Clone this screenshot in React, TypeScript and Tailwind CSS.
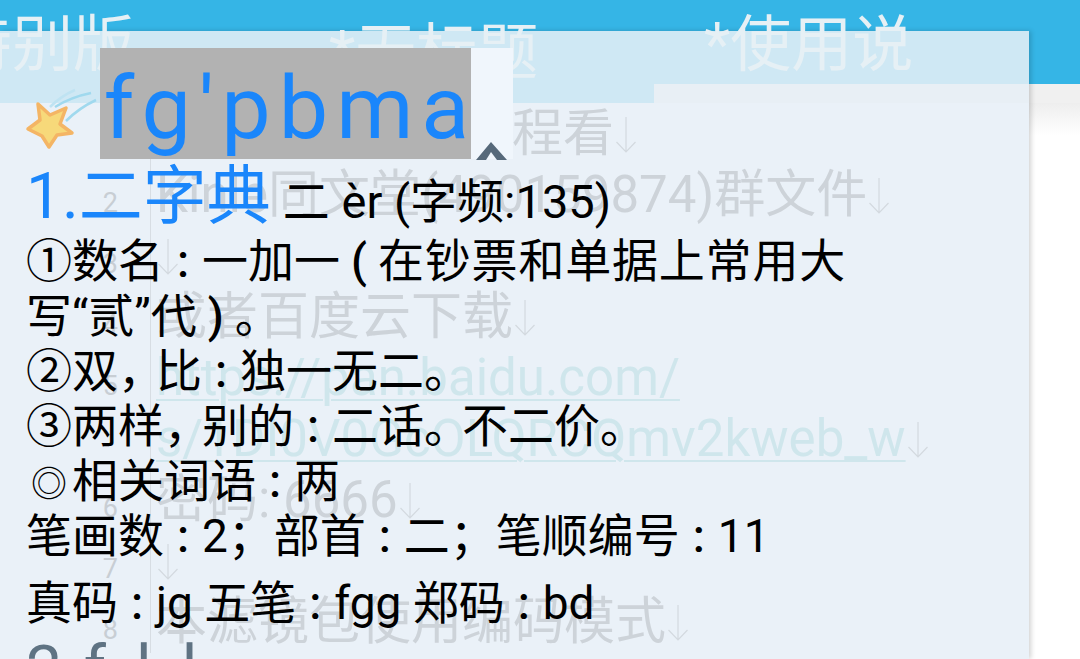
import type { ReactNode } from 'react'

const sc = "font-['Roboto','Noto_Sans_CJK_SC',sans-serif]"

// full-width punctuation is set narrower in the picture than the font's own box
function Punct({ children, center }: { children: string; center?: boolean }) {
  return (
    <span className={`inline-block w-[38px] leading-none ${center ? 'text-center font-medium' : ''}`}>{children}</span>
  )
}

function Colon() {
  return <Punct center>:</Punct>
}

function Arrow() {
  return (
    <svg viewBox="0 0 22 38" className="ml-px h-[38px] w-[22px] shrink-0">
      <path d="M11 1 V36 M1.5 26 L11 36 L20.5 26" stroke="#d3d9df" strokeWidth="1.2" fill="none" />
    </svg>
  )
}

function GhostRow({ n, children }: { n?: string; children?: ReactNode }) {
  return (
    <div className="flex h-[61px] items-center">
      <div className="flex h-full w-[151px] shrink-0 items-center justify-end border-r border-[#d7dde3] pr-[32px] pt-4 text-[27px] text-[#c8ced4]">
        {n}
      </div>
      <div className="flex items-center whitespace-nowrap pl-[5px] text-[51px] text-[#cdd3d9]">{children}</div>
    </div>
  )
}

function Row({ children }: { children: ReactNode }) {
  return <div className="h-[55px] whitespace-nowrap">{children}</div>
}

function Star() {
  return (
    <svg viewBox="0 0 80 70" className="absolute left-[24px] top-[86px] h-[70px] w-[80px]">
      <path d="M26 21 Q37 10 51 4" stroke="#bfe3f2" strokeWidth="2.5" fill="none" />
      <path d="M31 21 Q47 11 67 7" stroke="#a0d9ee" strokeWidth="2.5" fill="none" />
      <path d="M42 35 Q55 22 72 14" stroke="#a0d9ee" strokeWidth="2.5" fill="none" />
      <path
        d="M14 18 L26 29 L42 22 L36 38 L48 47 L33 49 L25 61 L18 50 L4 43 L16 34 Z"
        fill="#f7d97a"
        stroke="#f4b565"
        strokeWidth="3.5"
        strokeLinejoin="round"
      />
    </svg>
  )
}

export default function App() {
  return (
    <div className={`relative h-[659px] w-[1080px] overflow-hidden bg-white ${sc}`}>
      {/* app behind the panel */}
      <div className="h-[84px] bg-[#35b5e6]" />
      <div className="h-[19px] bg-[#f0f0f0]" />
      <div className="h-8 bg-gradient-to-b from-[#eeeeee] to-white" />

      {/* translucent panel */}
      <div className="absolute left-0 top-[31px] h-[628px] w-[1029px] bg-[#eaf1f8] shadow-[2px_0_5px_rgba(0,0,0,0.18)]">
        <div className="flex h-[72px] items-start">
          <div className="h-[72px] w-[654px] bg-[#cfe8f4]" />
          <div className="flex-1">
            <div className="h-[53px] bg-[#cfe8f4]" />
            <div className="h-[19px] bg-[#e8eff5]" />
          </div>
        </div>
      </div>

      {/* tab titles */}
      <div className="absolute left-[-49px] top-0 flex pt-[3px] text-[61px] leading-[84px] text-[#e6f0f5]">
        <span className="w-[378px] whitespace-nowrap">特别版</span>
        <span className="mt-2 w-[375px] whitespace-nowrap">*无标题</span>
        <span className="whitespace-nowrap">*使用说</span>
      </div>

      {/* ghost editor lines */}
      <div className="absolute left-0 top-[104px] flex w-[1029px] flex-col">
        <GhostRow n="1">
          <span className="ml-[356px]">程看</span>
          <Arrow />
        </GhostRow>
        <GhostRow n="2">
          Kinle同文堂(490159874)群文件
          <Arrow />
        </GhostRow>
        <GhostRow n="3">
          <Arrow />
        </GhostRow>
        <GhostRow n="4">
          或者百度云下载
          <Arrow />
        </GhostRow>
        <GhostRow n="5">
          <span className="text-[#cfe6ec] underline decoration-2 underline-offset-4">https://pan.baidu.com/</span>
        </GhostRow>
        <GhostRow>
          <span className="text-[#cfe6ec] underline decoration-2 underline-offset-4">s/1DI0V0GcOLQRCQmv2kweb_w</span>
          <Arrow />
        </GhostRow>
        <GhostRow n="6">
          密码: 6666
          <Arrow />
        </GhostRow>
        <GhostRow n="7">
          <Arrow />
        </GhostRow>
        <GhostRow n="8">
          本滤镜包使用编码模式
          <Arrow />
        </GhostRow>
      </div>

      {/* dictionary popup */}
      <Star />
      <div className="absolute left-[100px] top-[48px] flex h-[111px] w-[413px] bg-[#f0f6fc]">
        <div className="flex h-full w-[371px] items-center justify-center bg-[#b2b2b2] pl-[10px] pt-2 text-[88px] leading-none tracking-[8px] text-[#1a86fb]">
          fg'pbma
        </div>
        <svg viewBox="0 0 32 20" className="ml-[5px] mt-[94px] h-[20px] w-[32px] shrink-0 overflow-visible">
          <path d="M0 18 L15 0 L31 18 L21 18 L15 10 L10 18 Z" fill="#56697a" />
        </svg>
      </div>

      <div className="absolute left-[26px] top-[160px] flex w-[860px] flex-col text-[46px] leading-[55px] text-black">
        <div className="flex h-[74px] items-center whitespace-nowrap">
          <span className="text-[64px] leading-none text-[#1a86fb]">1.二字典</span>
          <span className="ml-3 mt-2 text-[47px]">二 èr (字频:135)</span>
        </div>
        <Row>
          ①数名
          <Colon />
          一加一
          <Punct center>(</Punct>
          <span className="tracking-[0.8px]">在钞票和单据上常用大</span>
        </Row>
        <Row>
          写“贰”代
          <Punct center>)</Punct>。
        </Row>
        <Row>
          ②双<Punct>，</Punct>比
          <Colon />
          独一无二。
        </Row>
        <Row>
          ③两样<Punct>，</Punct>别的
          <Colon />
          二话<Punct>。</Punct>不二价。
        </Row>
        <Row>
          <span className="inline-block w-[46px] text-center text-[36px] leading-none">◎</span>
          相关词语
          <Colon />
          两
        </Row>
        <Row>
          笔画数
          <Colon />
          2；部首
          <Colon />
          二；笔顺编号
          <Colon />
          11
        </Row>
        <div className="mt-3 h-[55px] whitespace-nowrap">
          真码
          <Colon />
          jg 五笔
          <Colon />
          fgg 郑码
          <Colon />
          bd
        </div>
        <div className="flex pt-1 text-[64px] leading-[70px] text-[#5f7383]">
          <span>2.</span>
          <span className="ml-[5px]">f</span>
          <span className="ml-[30px]">l</span>
          <span className="ml-[30px]">l</span>
        </div>
      </div>
    </div>
  )
}
